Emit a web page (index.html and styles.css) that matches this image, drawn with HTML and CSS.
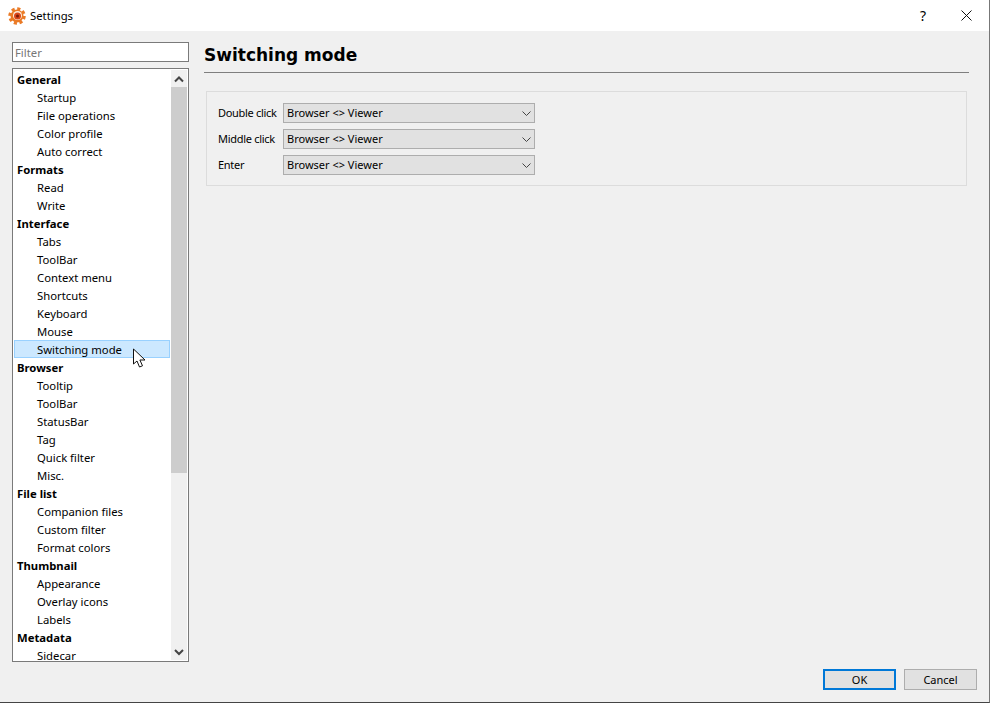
FILE: index.html
```html
<!DOCTYPE html>
<html>
<head>
<meta charset="utf-8"/>
<title>Settings</title>
<link rel="stylesheet" href="styles.css">
</head>
<body>
<div class="window">

<div class="titlebar">
  <svg class="app-icon" width="18" height="18" viewBox="0 0 18 18">
    <circle cx="9" cy="9" r="6.500" fill="#ea7a26"/>
    <circle cx="9" cy="9" r="7" fill="none" stroke="#ea7a26" stroke-width="3.500" stroke-dasharray="3 2.500"/>
    <circle cx="9.500" cy="8.500" r="4.500" fill="#fdeedd"/>
    <circle cx="9.500" cy="9" r="3.500" fill="#d9481c"/>
    <circle cx="9.500" cy="9" r="1.500" fill="#7a1a0a"/>
  </svg>
  <span class="title-text">Settings</span>
  <span class="help-btn">?</span>
  <svg class="close-btn" width="11" height="11" viewBox="0 0 11 11">
    <path d="M.5.500l10 10M10.500.500l-10 10" stroke="#111" fill="none"/>
  </svg>
</div>

<div class="content">

  <div class="sidebar">
    <input class="filter" type="text" placeholder="Filter">
    <div class="tree">
      <div class="tree-rows">
        <div class="row head">General</div>
        <div class="row">Startup</div>
        <div class="row">File operations</div>
        <div class="row">Color profile</div>
        <div class="row">Auto correct</div>
        <div class="row head">Formats</div>
        <div class="row">Read</div>
        <div class="row">Write</div>
        <div class="row head">Interface</div>
        <div class="row">Tabs</div>
        <div class="row">ToolBar</div>
        <div class="row">Context menu</div>
        <div class="row">Shortcuts</div>
        <div class="row">Keyboard</div>
        <div class="row">Mouse</div>
        <div class="row selected">Switching mode</div>
        <div class="row head">Browser</div>
        <div class="row">Tooltip</div>
        <div class="row">ToolBar</div>
        <div class="row">StatusBar</div>
        <div class="row">Tag</div>
        <div class="row">Quick filter</div>
        <div class="row">Misc.</div>
        <div class="row head">File list</div>
        <div class="row">Companion files</div>
        <div class="row">Custom filter</div>
        <div class="row">Format colors</div>
        <div class="row head">Thumbnail</div>
        <div class="row">Appearance</div>
        <div class="row">Overlay icons</div>
        <div class="row">Labels</div>
        <div class="row head">Metadata</div>
        <div class="row">Sidecar</div>
      </div>
      <div class="scrollbar">
        <svg class="arrow" width="16" height="17" viewBox="0 0 16 17">
          <path d="M4 11.500l4-4 4 4" stroke="#444" stroke-width="2" fill="none"/>
        </svg>
        <div class="track"><div class="thumb"></div></div>
        <svg class="arrow" width="16" height="16" viewBox="0 0 16 16">
          <path d="M4 6l4 4 4-4" stroke="#444" stroke-width="2" fill="none"/>
        </svg>
      </div>
    </div>
    <svg class="cursor" width="15" height="21" viewBox="0 0 15 21">
      <path d="M1.500 1v15l3.500-3 2.500 6 3-1.200-2.600-5.800H13z" fill="#fff" stroke="#111"/>
    </svg>
  </div>

  <div class="main">
    <h1 class="page-title">Switching mode</h1>
    <div class="group">
      <div class="field">
        <span class="field-label">Double click</span>
        <div class="combo">Browser &lt;&gt; Viewer
          <svg width="9" height="5" viewBox="0 0 9 5"><path d="M.5.500l4 4 4-4" stroke="#444" fill="none"/></svg>
        </div>
      </div>
      <div class="field">
        <span class="field-label">Middle click</span>
        <div class="combo">Browser &lt;&gt; Viewer
          <svg width="9" height="5" viewBox="0 0 9 5"><path d="M.5.500l4 4 4-4" stroke="#444" fill="none"/></svg>
        </div>
      </div>
      <div class="field">
        <span class="field-label">Enter</span>
        <div class="combo">Browser &lt;&gt; Viewer
          <svg width="9" height="5" viewBox="0 0 9 5"><path d="M.5.500l4 4 4-4" stroke="#444" fill="none"/></svg>
        </div>
      </div>
    </div>
    <div class="buttons">
      <button class="btn default">OK</button>
      <button class="btn">Cancel</button>
    </div>
  </div>

</div>
</div>
</body>
</html>
```

FILE: styles.css
```css
html, body {
   margin: 0;
   height: 100%;
   background-color: #2b2b2b;
}

body {
   font-family: "Noto Sans", sans-serif;
   font-size: 11.3px;
   color: #000;
   overflow: hidden;
}

.window {
   height: 702px;
   width: 989px;
   display: flex;
   flex-direction: column;
   border-right: 1px solid #777;
   border-bottom: 1px solid #444;
   background-color: #f0f0f0;
}

.titlebar {
   height: 31px;
   flex: none;
   background-color: #fff;
   display: flex;
   align-items: center;
   padding-left: 8px;
}

.app-icon {
   margin-right: 4px;
}

.title-text {
   flex: 1;
   font-size: 11.3px;
}

.help-btn {
   font-size: 14px;
   margin-right: 35px;
}

.close-btn {
   margin-right: 17px;
}

.content {
   flex: 1;
   display: flex;
   min-height: 0;
}

/* left column */
.sidebar {
   position: relative;
   width: 177px;
   margin-left: 12px;
   padding-top: 11px;
   flex: none;
}

.filter {
   display: block;
   box-sizing: border-box;
   width: 177px;
   height: 20px;
   margin: 0 0 6px 0;
   padding: 0 2px;
   border: 1px solid #7a7a7a;
   font-family: inherit;
   font-size: 11.3px;
   outline: none;
}

.filter::placeholder {
   color: #777;
}

.tree {
   box-sizing: border-box;
   height: 594px;
   border: 1px solid #7a7a7a;
   background-color: #fff;
   display: flex;
   padding: 1px;
   overflow: hidden;
}

.tree-rows {
   flex: 1;
   overflow: hidden;
}

.row {
   box-sizing: border-box;
   height: 18px;
   line-height: 17px;
   padding-left: 22px;
   margin-right: 1px;
   border: 1px solid transparent;
   white-space: nowrap;
}

.row.head {
   padding-left: 2px;
   font-weight: bold;
}

.row.selected {
   background-color: #cce8ff;
   border-color: #99d1ff;
}

.scrollbar {
   width: 16px;
   flex: none;
   display: flex;
   flex-direction: column;
   background-color: #f0f0f0;
}

.arrow {
   flex: none;
   display: block;
}

.track {
   flex: 1;
}

.thumb {
   height: 386px;
   background-color: #cdcdcd;
}

.cursor {
   position: absolute;
   left: 120px;
   top: 317px;
}

/* right column */
.main {
   flex: 1;
   display: flex;
   flex-direction: column;
   padding: 0 12px 12px 15px;
   min-width: 0;
}

.page-title {
   margin: 0 8px 0 0;
   height: 42px;
   line-height: 48px;
   box-sizing: border-box;
   font-family: "DejaVu Sans", sans-serif;
   font-size: 17px;
   font-weight: bold;
   border-bottom: 1px solid #7f7f7f;
}

.group {
   box-sizing: border-box;
   height: 95px;
   margin: 18px 10px 0 2px;
   padding: 11px 11px;
   border: 1px solid #dcdcdc;
   display: flex;
   flex-direction: column;
   gap: 6px;
}

.field {
   display: flex;
   align-items: center;
   height: 20px;
}

.field-label {
   width: 65px;
   flex: none;
   white-space: nowrap;
   font-size: 11px;
   letter-spacing: -0.3px;
   padding-bottom: 1px;
}

.combo {
   box-sizing: border-box;
   width: 252px;
   height: 20px;
   line-height: 18px;
   padding: 0 3px 0 3px;
   font-size: 11px;
   border: 1px solid #adadad;
   background-color: #e1e1e1;
   display: flex;
   justify-content: space-between;
   align-items: center;
}

.buttons {
   margin-top: auto;
   display: flex;
   justify-content: flex-end;
   gap: 8px;
}

.btn {
   box-sizing: border-box;
   width: 73px;
   height: 21px;
   padding: 0;
   border: 1px solid #adadad;
   background-color: #e1e1e1;
   font-family: inherit;
   font-size: 11px;
   color: #000;
}

.btn.default {
   border: 2px solid #0078d7;
}
```
